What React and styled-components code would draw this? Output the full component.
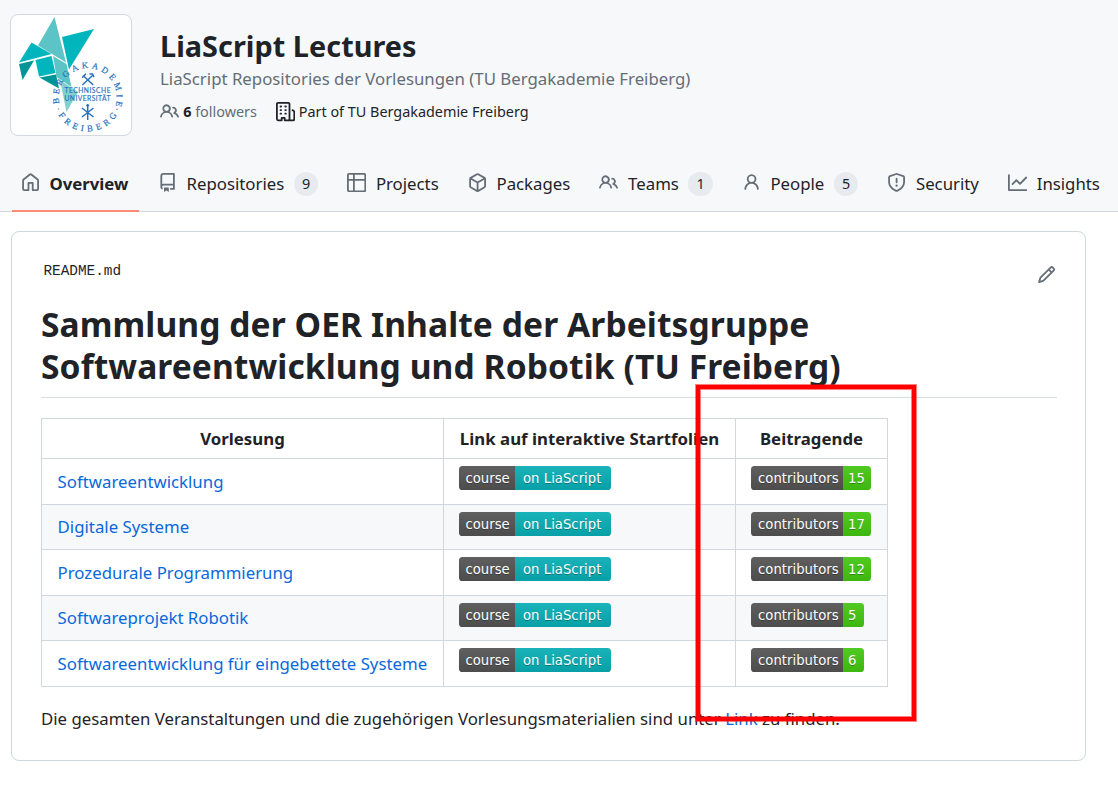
import React from "react";
import styled, { createGlobalStyle } from "styled-components";

const GlobalStyle = createGlobalStyle`
  * { box-sizing: border-box; }
  body {
    margin: 0;
    background: #fff;
    color: #1f2328;
    font-family: "Noto Sans", "Liberation Sans", sans-serif;
    font-size: 16.8px;
    line-height: 1.5;
    overflow: hidden;
  }
`;

const Page = styled.div`
  position: relative;
  width: 1118px;
  height: 788px;
  overflow: hidden;
`;

const Header = styled.header`
  height: 212px;
  display: flex;
  flex-direction: column;
  justify-content: space-between;
  background: #f6f8fa;
  border-bottom: 1px solid #d0d7de;
`;

const Profile = styled.div`
  display: flex;
  gap: 28px;
  padding: 14px 0 0 10px;
`;

const Avatar = styled.div`
  width: 122px;
  height: 122px;
  border: 1px solid #d4d9df;
  border-radius: 8px;
  background: #fff;
  overflow: hidden;
`;

const ProfileText = styled.div`
  display: flex;
  flex-direction: column;
`;

const OrgName = styled.h1`
  margin: 14px 0 0;
  font-size: 28.8px;
  font-weight: 700;
  line-height: 36px;
  letter-spacing: 0.05px;
`;

const Tagline = styled.div`
  margin-top: 2px;
  color: #656d76;
  line-height: 25px;
  letter-spacing: 0.01px;
`;

const Meta = styled.div`
  display: flex;
  align-items: center;
  margin-top: 10px;
  height: 22px;
  font-size: 14.4px;
  color: #656d76;
  white-space: pre;

  b { color: #1f2328; font-weight: 700; }
`;

const MetaItem = styled.span`
  display: flex;
  align-items: center;
  gap: 4px;
  margin-right: 18.6px;
  color: ${(p) => (p.$dark ? "#1f2328" : "#656d76")};
`;

const Nav = styled.nav`
  display: flex;
  gap: 9.6px;
  padding-left: 12px;
  margin-bottom: -1px;
`;

const Tab = styled.a`
  display: flex;
  align-items: center;
  flex: none;
  height: 55px;
  padding: 0 ${(p) => (p.$active ? 10.2 : 9.8)}px 0 ${(p) => (p.$active ? 8.6 : 9.6)}px;
  border-bottom: 2px solid ${(p) => (p.$active ? "#fd8c73" : "transparent")};
  font-weight: ${(p) => (p.$active ? 700 : 400)};

  svg { margin-right: 9.6px; color: #656d76; position: relative; top: -1px; }
`;

const Counter = styled.span`
  min-width: 24px;
  height: 24px;
  margin-left: 9.6px;
  padding: 0 8px;
  border-radius: 12px;
  background: #e7eaef;
  font-size: 14.4px;
  line-height: 24px;
  text-align: center;
`;

const Card = styled.main`
  width: 1075px;
  height: 530px;
  margin: 19px 0 0 11px;
  padding: 29px 29px 0 29px;
  border: 1px solid #d0d7de;
  border-radius: 8px;
`;

const FileBar = styled.div`
  display: flex;
  justify-content: space-between;
  height: 42px;
  padding-left: 2.4px;
  font-family: "Liberation Mono", monospace;
  font-size: 14.4px;
  line-height: 20px;

  svg { color: #656d76; margin-top: 4px; }
`;

const Heading = styled.h1`
  margin: 0 -1px 20px 0;
  height: 95px;
  border-bottom: 1px solid #d8dee4;
  font-size: 33.6px;
  font-weight: 700;
  line-height: 42px;
  letter-spacing: 0.07px;
`;

const Table = styled.div`
  width: 847px;
  border: 1px solid #d0d7de;
`;

const Row = styled.div`
  display: grid;
  grid-template-columns: 401px 292px 152px;
  height: ${(p) => p.$height}px;
  background: ${(p) => (p.$striped ? "#f6f8fa" : "#fff")};

  & + & { border-top: 1px solid #d0d7de; }
`;

const Cell = styled.div`
  padding: 7px 0 0 15.6px;

  & + & { border-left: 1px solid #d0d7de; padding-left: 15px; }
`;

const HeadCell = styled.div`
  padding-top: 7px;
  font-weight: 700;
  text-align: center;
  letter-spacing: 0.03px;

  & + & { border-left: 1px solid #d0d7de; }
`;

const Link = styled.a`
  color: #0969da;
`;

const CourseLink = styled(Link)`
  display: block;
  padding-top: ${(p) => p.$offset}px;
  letter-spacing: 0.01px;
`;

const BadgeBox = styled.span`
  display: flex;
  width: fit-content;
  height: 24px;
  border-radius: 3.6px;
  overflow: hidden;
  font-family: "DejaVu Sans", sans-serif;
  font-size: 13.2px;
  line-height: 25px;
  letter-spacing: 0.04px;
  color: #fff;
  text-shadow: 0 1.2px 0 rgba(1, 1, 1, 0.3);
`;

const BadgePart = styled.span`
  width: ${(p) => p.$width}px;
  padding-left: ${(p) => p.$inset}px;
  white-space: nowrap;
  background: linear-gradient(rgba(187, 187, 187, 0.1), rgba(0, 0, 0, 0.1)), ${(p) => p.$color};
`;

const Closing = styled.p`
  margin: 19px 0 0;
  letter-spacing: 0.008px;
`;

const Highlight = styled.div`
  position: absolute;
  left: 696px;
  top: 385px;
  width: 220px;
  height: 336px;
  border: 4px solid #f00;
  box-shadow: 0 0 0 1px rgba(255, 0, 0, 0.5), inset 0 0 0 1px rgba(255, 0, 0, 0.5);
`;

const icons = {
  home: "M6.906.664a1.749 1.749 0 0 1 2.187 0l5.25 4.2c.415.332.657.835.657 1.367v7.019A1.75 1.75 0 0 1 13.25 15h-3.5a.75.75 0 0 1-.75-.75V9H7v5.25a.75.75 0 0 1-.75.75h-3.5A1.75 1.75 0 0 1 1 13.25V6.23c0-.531.242-1.034.657-1.366l5.25-4.2Zm1.25 1.171a.25.25 0 0 0-.312 0l-5.25 4.2a.25.25 0 0 0-.094.196v7.019c0 .138.112.25.25.25H5.5V8.25a.75.75 0 0 1 .75-.75h3.5a.75.75 0 0 1 .75.75v5.25h2.75a.25.25 0 0 0 .25-.25V6.23a.25.25 0 0 0-.094-.195Z",
  repo: "M2 2.5A2.5 2.5 0 0 1 4.5 0h8.75a.75.75 0 0 1 .75.75v12.5a.75.75 0 0 1-.75.75h-2.5a.75.75 0 0 1 0-1.5h1.75v-2h-8a1 1 0 0 0-.714 1.7.75.75 0 1 1-1.072 1.05A2.495 2.495 0 0 1 2 11.5Zm10.5-1h-8a1 1 0 0 0-1 1v6.708A2.486 2.486 0 0 1 4.5 9h8ZM5 12.25a.25.25 0 0 1 .25-.25h3.5a.25.25 0 0 1 .25.25v3.25a.25.25 0 0 1-.4.2l-1.45-1.087a.249.249 0 0 0-.3 0L5.4 15.7a.25.25 0 0 1-.4-.2Z",
  table: "M0 1.75C0 .784.784 0 1.75 0h12.5C15.216 0 16 .784 16 1.75v12.5A1.75 1.75 0 0 1 14.25 16H1.75A1.75 1.75 0 0 1 0 14.25ZM6.5 6.5v8h7.75a.25.25 0 0 0 .25-.25V6.5Zm8-1.5V1.75a.25.25 0 0 0-.25-.25H6.5V5Zm-13 1.5v7.75c0 .138.112.25.25.25H5v-8ZM5 5V1.5H1.75a.25.25 0 0 0-.25.25V5Z",
  package: "m8.878.392 5.25 3.045c.54.314.872.89.872 1.514v6.098a1.75 1.75 0 0 1-.872 1.514l-5.25 3.045a1.75 1.75 0 0 1-1.756 0l-5.25-3.045A1.75 1.75 0 0 1 1 11.049V4.951c0-.624.332-1.201.872-1.514L7.122.392a1.75 1.75 0 0 1 1.756 0ZM7.875 1.69l-4.63 2.685L8 7.133l4.755-2.758-4.63-2.685a.248.248 0 0 0-.25 0ZM2.5 5.677v5.372c0 .09.047.171.125.216l4.625 2.683V8.432Zm6.25 8.271 4.625-2.683a.25.25 0 0 0 .125-.216V5.677L8.75 8.432Z",
  people: "M2 5.5a3.5 3.5 0 1 1 5.898 2.549 5.508 5.508 0 0 1 3.034 4.084.75.75 0 1 1-1.482.235 4 4 0 0 0-7.9 0 .75.75 0 0 1-1.482-.236A5.507 5.507 0 0 1 3.102 8.05 3.493 3.493 0 0 1 2 5.5ZM11 4a3.001 3.001 0 0 1 2.22 5.018 5.01 5.01 0 0 1 2.56 3.012.749.749 0 0 1-.885.954.752.752 0 0 1-.549-.514 3.507 3.507 0 0 0-2.522-2.372.75.75 0 0 1-.574-.73v-.352a.75.75 0 0 1 .416-.672A1.5 1.5 0 0 0 11 5.5.75.75 0 0 1 11 4Zm-5.5-.5a2 2 0 1 0-.001 3.999A2 2 0 0 0 5.5 3.5Z",
  person: "M10.561 8.073a6.005 6.005 0 0 1 3.432 5.142.75.75 0 1 1-1.498.07 4.5 4.5 0 0 0-8.99 0 .75.75 0 0 1-1.498-.07 6.004 6.004 0 0 1 3.431-5.142 3.999 3.999 0 1 1 5.123 0ZM10.5 5a2.5 2.5 0 1 0-5 0 2.5 2.5 0 0 0 5 0Z",
  shield: "M7.467.133a1.748 1.748 0 0 1 1.066 0l5.25 1.68A1.75 1.75 0 0 1 15 3.48V7c0 1.566-.32 3.182-1.303 4.682-.983 1.498-2.585 2.813-5.032 3.855a1.697 1.697 0 0 1-1.33 0c-2.447-1.042-4.049-2.357-5.032-3.855C1.32 10.182 1 8.566 1 7V3.48a1.75 1.75 0 0 1 1.217-1.667Zm.61 1.429a.25.25 0 0 0-.153 0l-5.25 1.68a.25.25 0 0 0-.174.238V7c0 1.358.275 2.666 1.057 3.86.784 1.194 2.121 2.34 4.366 3.297a.196.196 0 0 0 .154 0c2.245-.956 3.582-2.104 4.366-3.298C13.225 9.666 13.5 8.36 13.5 7V3.48a.251.251 0 0 0-.174-.237l-5.25-1.68ZM8.75 4.75v3a.75.75 0 0 1-1.5 0v-3a.75.75 0 0 1 1.5 0ZM9 10.5a1 1 0 1 1-2 0 1 1 0 0 1 2 0Z",
  graph: "M1.5 1.75V13.5h13.75a.75.75 0 0 1 0 1.5H.75a.75.75 0 0 1-.75-.75V1.75a.75.75 0 0 1 1.5 0Zm14.28 2.53-5.25 5.25a.75.75 0 0 1-1.06 0L7 7.06 4.28 9.78a.751.751 0 0 1-1.042-.018.751.751 0 0 1-.018-1.042l3.25-3.25a.75.75 0 0 1 1.06 0L10 7.94l4.72-4.72a.751.751 0 0 1 1.042.018.751.751 0 0 1 .018 1.042Z",
  pencil: "M11.013 1.427a1.75 1.75 0 0 1 2.474 0l1.086 1.086a1.75 1.75 0 0 1 0 2.474l-8.61 8.61c-.21.21-.47.364-.756.445l-3.251.93a.75.75 0 0 1-.927-.928l.929-3.25c.081-.286.235-.547.445-.758l8.61-8.61Zm.176 4.823L9.75 4.81l-6.286 6.287a.253.253 0 0 0-.064.108l-.558 1.953 1.953-.558a.253.253 0 0 0 .108-.064Zm1.238-3.763a.25.25 0 0 0-.354 0L10.811 3.75l1.439 1.44 1.263-1.263a.25.25 0 0 0 0-.354Z",
  organization: "M1.75 16A1.75 1.75 0 0 1 0 14.25V1.75C0 .784.784 0 1.75 0h8.5C11.216 0 12 .784 12 1.75v12.5c0 .085-.006.168-.018.25h2.268a.25.25 0 0 0 .25-.25V8.285a.25.25 0 0 0-.111-.208l-1.055-.703a.749.749 0 1 1 .832-1.248l1.055.703c.487.325.779.871.779 1.456v5.965A1.75 1.75 0 0 1 14.25 16h-3.5a.766.766 0 0 1-.197-.026c-.099.017-.2.026-.303.026h-3a.75.75 0 0 1-.75-.75V14h-1v1.25a.75.75 0 0 1-.75.75Zm-.25-1.75c0 .138.112.25.25.25H4v-1.25a.75.75 0 0 1 .75-.75h2.5a.75.75 0 0 1 .75.75v1.25h2.25a.25.25 0 0 0 .25-.25V1.75a.25.25 0 0 0-.25-.25h-8.5a.25.25 0 0 0-.25.25ZM3.75 6h.5a.75.75 0 0 1 0 1.5h-.5a.75.75 0 0 1 0-1.5ZM3 3.75A.75.75 0 0 1 3.75 3h.5a.75.75 0 0 1 0 1.5h-.5A.75.75 0 0 1 3 3.75Zm4 3A.75.75 0 0 1 7.75 6h.5a.75.75 0 0 1 0 1.5h-.5A.75.75 0 0 1 7 6.75ZM7.75 3h.5a.75.75 0 0 1 0 1.5h-.5a.75.75 0 0 1 0-1.5ZM3 9.75A.75.75 0 0 1 3.75 9h.5a.75.75 0 0 1 0 1.5h-.5A.75.75 0 0 1 3 9.75ZM7.75 9h.5a.75.75 0 0 1 0 1.5h-.5a.75.75 0 0 1 0-1.5Z",
};

const Icon = ({ name }) => (
  <svg width="19.2" height="19.2" viewBox="0 0 16 16" fill="currentColor" aria-hidden="true">
    <path d={icons[name]} />
  </svg>
);

const Logo = () => (
  <svg width="120" height="120" viewBox="11 15 120 120">
    <defs>
      <path id="arc-top" d="M 59.9 105.5 A 29 29 0 1 1 115.5 105.5" />
      <path id="arc-bottom" d="M 53.2 97 A 34.5 34.5 0 0 0 122.2 97" />
    </defs>
    <polygon points="54.5,17 66,62.5 38,45.5" fill="#5cc4c6" />
    <polygon points="62,37 94,29 69,69.5" fill="#00b5bc" />
    <polygon points="31.5,42.5 51.5,54 19,62.5" fill="#00b5bc" />
    <polygon points="19,64 34,60.5 22.5,80" fill="#009597" />
    <polygon points="35.5,60 51.5,56 55.5,73 39,76.5" fill="#00b5bc" />
    <polygon points="53,56 66.5,64 71.5,87 56.5,77" fill="#5cc4c6" />
    <polygon points="39.5,77.5 56,74.5 59,88.5" fill="#009597" />
    <polygon points="60,80 78,92 66.5,112" fill="#80d0cf" />
    <g fill="#2672bd" stroke="#2672bd" strokeWidth="0.2" fontFamily="Liberation Serif, serif" fontSize="8.8">
      <text textLength="106" lengthAdjust="spacing">
        <textPath href="#arc-top" startOffset="2">BERGAKADEMIE</textPath>
      </text>
      <text textLength="84" lengthAdjust="spacing">
        <textPath href="#arc-bottom" startOffset="12">·FREIBERG·</textPath>
      </text>
    </g>
    <g fill="#2672bd" stroke="#2672bd" strokeWidth="0.15" fontFamily="Lato, sans-serif" fontSize="6.7">
      <text x="64.5" y="93.3" textLength="46" lengthAdjust="spacing">TECHNISCHE</text>
      <text x="64.5" y="101.3" textLength="46" lengthAdjust="spacing">UNIVERSITÄT</text>
    </g>
    <g stroke="#2672bd" strokeWidth="1.5" fill="none">
      <path d="M83 75.5 93.3 85M92.5 75.5 82.3 85M82 77.8l4-4M89.5 74h3l1.5 3" />
      <path d="M87.7 104v16M82 108l11.5 9M93.5 108 82 117M86.2 105.5h3" />
    </g>
  </svg>
);

const Badge = ({ label, value, color, labelWidth, valueWidth, labelInset, valueInset }) => (
  <BadgeBox>
    <BadgePart $color="#555" $width={labelWidth} $inset={labelInset}>{label}</BadgePart>
    <BadgePart $color={color} $width={valueWidth} $inset={valueInset}>{value}</BadgePart>
  </BadgeBox>
);

const tabs = [
  { icon: "home", label: "Overview", active: true },
  { icon: "repo", label: "Repositories", count: 9 },
  { icon: "table", label: "Projects" },
  { icon: "package", label: "Packages" },
  { icon: "people", label: "Teams", count: 1 },
  { icon: "person", label: "People", count: 5 },
  { icon: "shield", label: "Security" },
  { icon: "graph", label: "Insights" },
];

const courses = [
  { name: "Softwareentwicklung", contributors: 15 },
  { name: "Digitale Systeme", contributors: 17 },
  { name: "Prozedurale Programmierung", contributors: 12 },
  { name: "Softwareprojekt Robotik", contributors: 5 },
  { name: "Softwareentwicklung für eingebettete Systeme", contributors: 6 },
];

export default function App() {
  return (
    <Page>
      <GlobalStyle />
      <Header>
        <Profile>
          <Avatar><Logo /></Avatar>
          <ProfileText>
            <OrgName>LiaScript Lectures</OrgName>
            <Tagline>LiaScript Repositories der Vorlesungen (TU Bergakademie Freiberg)</Tagline>
            <Meta>
              <MetaItem><Icon name="people" /><span><b>6</b> followers</span></MetaItem>
              <MetaItem $dark><Icon name="organization" />Part of TU Bergakademie Freiberg</MetaItem>
            </Meta>
          </ProfileText>
        </Profile>
        <Nav>
          {tabs.map((t) => (
            <Tab key={t.label} $active={t.active}>
              <Icon name={t.icon} />
              {t.label}
              {t.count && <Counter>{t.count}</Counter>}
            </Tab>
          ))}
        </Nav>
      </Header>
      <Card>
        <FileBar>
          README.md
          <Icon name="pencil" />
        </FileBar>
        <Heading>
          Sammlung der OER Inhalte der Arbeitsgruppe
          <br />
          Softwareentwicklung und Robotik (TU Freiberg)
        </Heading>
        <Table>
          <Row $height={39}>
            <HeadCell>Vorlesung</HeadCell>
            <HeadCell>Link auf interaktive Startfolien</HeadCell>
            <HeadCell>Beitragende</HeadCell>
          </Row>
          {courses.map((c, i) => (
            <Row key={c.name} $height={i % 2 ? 45 : 46} $striped={i % 2 === 1}>
              <Cell><CourseLink $offset={i % 2 ? 2 : 3}>{c.name}</CourseLink></Cell>
              <Cell>
                <Badge
                  label="course"
                  value="on LiaScript"
                  color="#08b2ba"
                  labelWidth={56}
                  labelInset={6.4}
                  valueWidth={96}
                  valueInset={8}
                />
              </Cell>
              <Cell>
                <Badge
                  label="contributors"
                  value={c.contributors}
                  color="#4c1"
                  labelWidth={92}
                  labelInset={7}
                  valueWidth={c.contributors > 9 ? 28 : 21}
                  valueInset={5}
                />
              </Cell>
            </Row>
          ))}
        </Table>
        <Closing>
          Die gesamten Veranstaltungen und die zugehörigen Vorlesungsmaterialien sind unter <Link>Link</Link> zu finden.
        </Closing>
      </Card>
      <Highlight />
    </Page>
  );
}
